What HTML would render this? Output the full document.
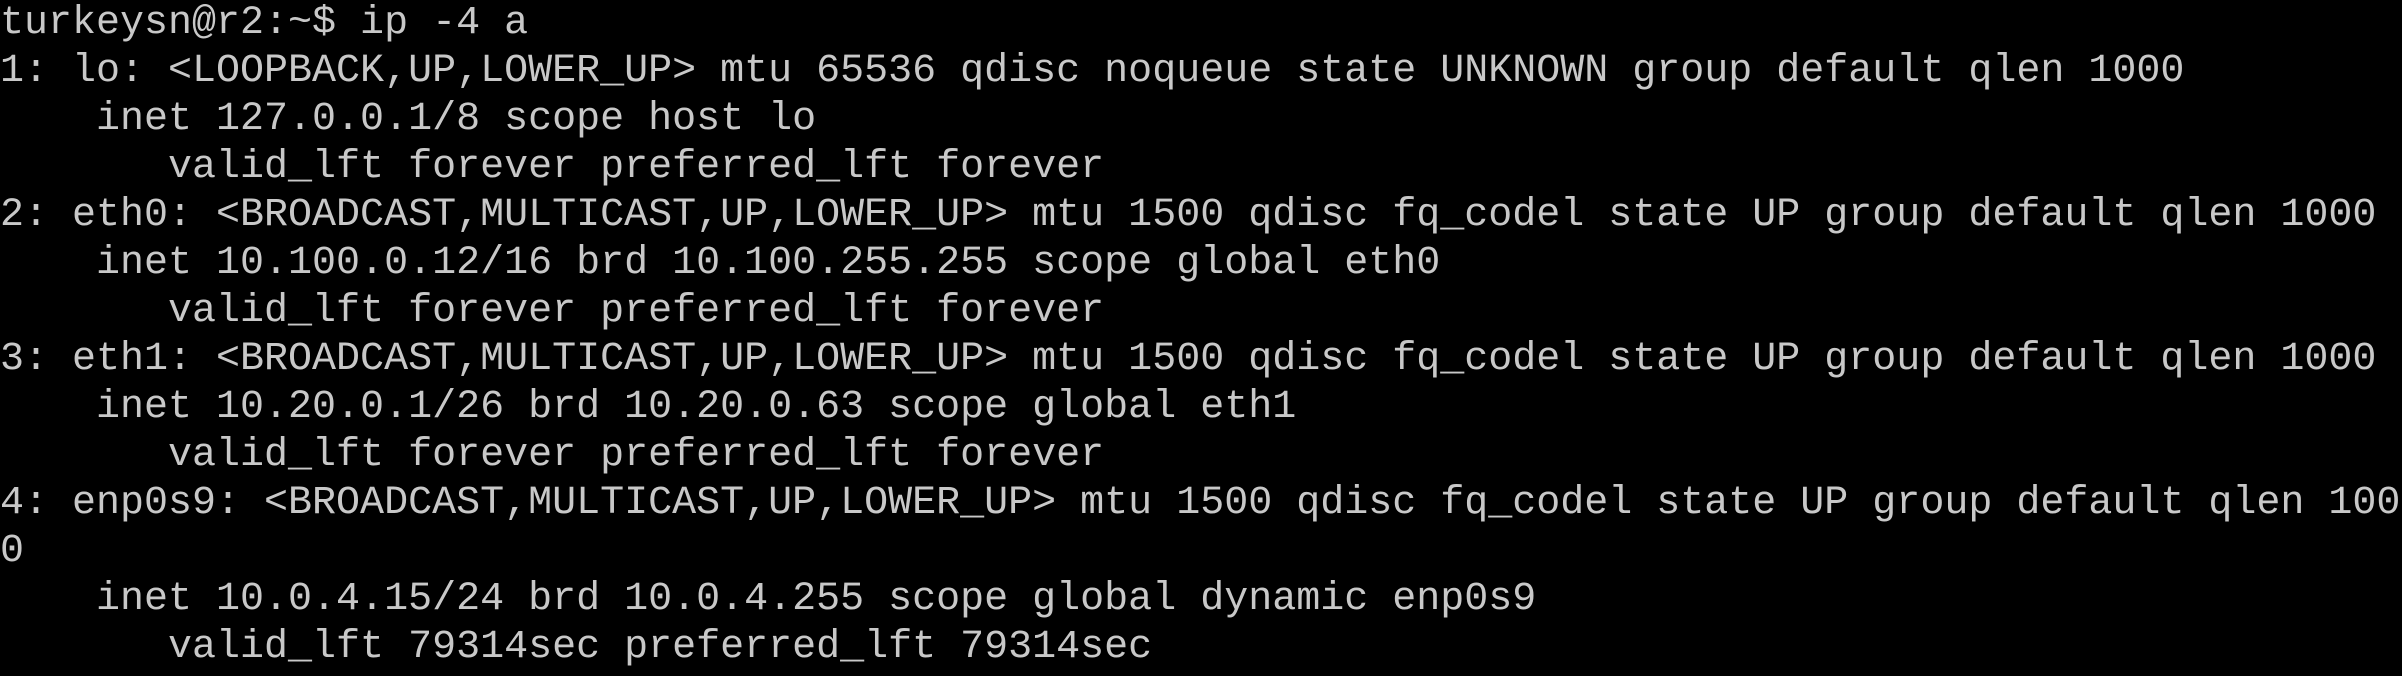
<!DOCTYPE html>
<html><head><meta charset="utf-8"><style>
html,body{margin:0;padding:0;background:#000;width:2402px;height:676px;overflow:hidden}
#t{position:relative;width:2402px;height:676px;overflow:hidden;background:#000}
pre{position:absolute;left:0;top:0;margin:0;font-family:"Liberation Mono","DejaVu Sans Mono",monospace;font-size:40px;line-height:48px;color:#c8c8c8;white-space:pre}
</style></head><body><div id="t"><pre>turkeysn@r2:~$ ip -4 a
1: lo: &lt;LOOPBACK,UP,LOWER_UP&gt; mtu 65536 qdisc noqueue state UNKNOWN group default qlen 1000
    inet 127.0.0.1/8 scope host lo
       valid_lft forever preferred_lft forever
2: eth0: &lt;BROADCAST,MULTICAST,UP,LOWER_UP&gt; mtu 1500 qdisc fq_codel state UP group default qlen 1000
    inet 10.100.0.12/16 brd 10.100.255.255 scope global eth0
       valid_lft forever preferred_lft forever
3: eth1: &lt;BROADCAST,MULTICAST,UP,LOWER_UP&gt; mtu 1500 qdisc fq_codel state UP group default qlen 1000
    inet 10.20.0.1/26 brd 10.20.0.63 scope global eth1
       valid_lft forever preferred_lft forever
4: enp0s9: &lt;BROADCAST,MULTICAST,UP,LOWER_UP&gt; mtu 1500 qdisc fq_codel state UP group default qlen 100
0
    inet 10.0.4.15/24 brd 10.0.4.255 scope global dynamic enp0s9
       valid_lft 79314sec preferred_lft 79314sec</pre></div></body></html>
